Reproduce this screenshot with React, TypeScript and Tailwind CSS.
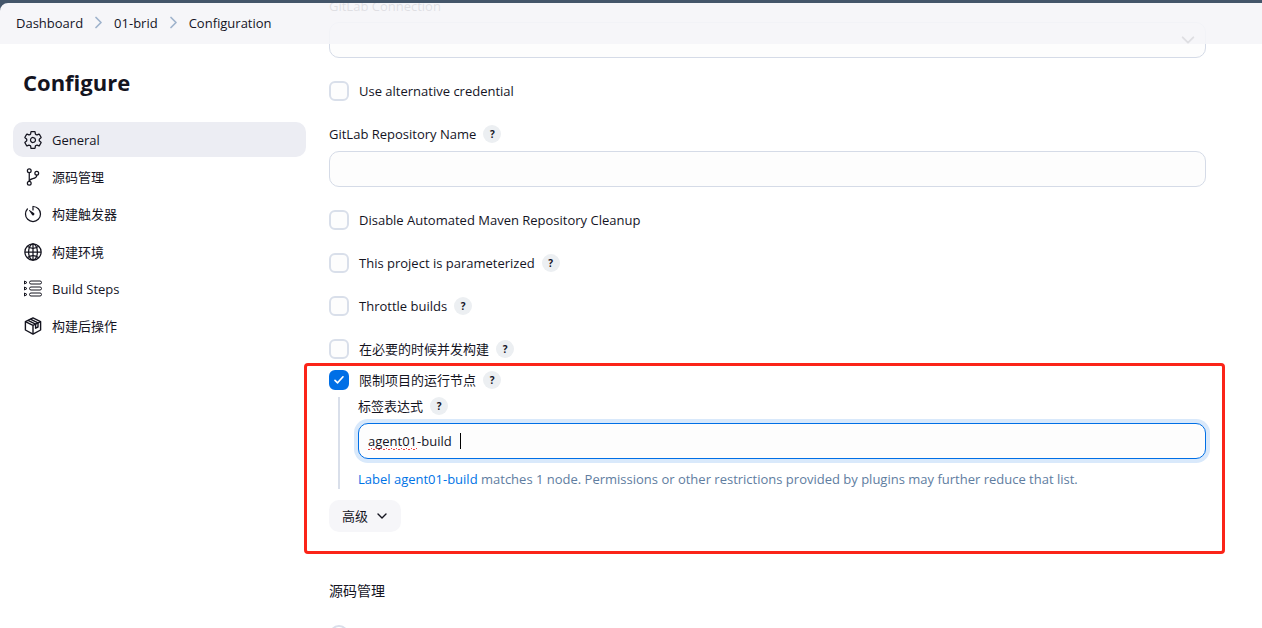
import type { ComponentType, ReactNode } from 'react';
import { IoGitBranchOutline, IoGlobeOutline, IoSettingsOutline, IoTimerOutline } from 'react-icons/io5';

type IconProps = { className?: string };

type NavItem = {
    label: string;
    icon: ComponentType<IconProps>;
    active?: boolean;
};

function StepsIcon({ className }: IconProps) {
    return (
        <svg className={className} viewBox="-1 -1 20 20" fill="none" stroke="currentColor" strokeWidth="1" strokeLinejoin="round">
            {[2.5, 8.5, 14.5].map((y) => (
                <g key={y}>
                    <path d={`M0.5 ${y - 1.5} L3 ${y} L0.5 ${y + 1.5} Z`} />
                    <rect x="5.5" y={y - 1.5} width="12" height="3" rx="1.5" />
                </g>
            ))}
        </svg>
    );
}

function PackageIcon({ className }: IconProps) {
    return (
        <svg className={className} viewBox="-1 -1 20 20" fill="none" stroke="currentColor" strokeWidth="1.4" strokeLinejoin="round">
            <path d="M9 0.9 L16.6 4.6 V13 L9 17.1 L1.4 13 V4.6 Z" />
            <path d="M1.4 4.6 L9 8.4 L16.6 4.6 M9 8.4 V17.1" />
            <path d="M4 3.4 L11.6 7.1 V11.2 L14 10 V5.9 L6.4 2.2" />
        </svg>
    );
}

function Chevron({ className }: IconProps) {
    return (
        <svg className={className} viewBox="0 0 12 12" fill="none" stroke="currentColor" strokeWidth="1.4" strokeLinecap="round" strokeLinejoin="round">
            <path d="M2 4 L6 8 L10 4" />
        </svg>
    );
}

const crumbs = ['Dashboard', '01-brid', 'Configuration'];

const navItems: NavItem[] = [
    { label: 'General', icon: IoSettingsOutline, active: true },
    { label: '源码管理', icon: IoGitBranchOutline },
    { label: '构建触发器', icon: IoTimerOutline },
    { label: '构建环境', icon: IoGlobeOutline },
    { label: 'Build Steps', icon: StepsIcon },
    { label: '构建后操作', icon: PackageIcon },
];

function Help() {
    return (
        <button
            type="button"
            aria-label="Help"
            className="flex size-[18px] shrink-0 items-center justify-center rounded-full bg-[#eceff2] text-[10px] leading-none font-bold"
        >
            ?
        </button>
    );
}

type CheckProps = { id: string; label: string; help?: boolean; checked?: boolean };

function Check({ id, label, help, checked }: CheckProps) {
    return (
        <div className="flex h-5 items-center gap-[7px]">
            <div className="flex items-center gap-[10px]">
                <span className="relative flex size-5">
                    <input
                        id={id}
                        type="checkbox"
                        defaultChecked={checked}
                        className="peer size-5 appearance-none rounded-md border-2 border-[#d9dfea] bg-[#fdfdfd] checked:border-[#006fe6] checked:bg-[#006fe6]"
                    />
                    <svg
                        className="pointer-events-none absolute inset-0 hidden size-5 peer-checked:block"
                        viewBox="0 0 20 20"
                        fill="none"
                        stroke="white"
                        strokeWidth="1.7"
                        strokeLinecap="round"
                        strokeLinejoin="round"
                    >
                        <path d="M6 10.4 L8.6 12.8 L14 6.8" />
                    </svg>
                </span>
                <label htmlFor={id}>{label}</label>
            </div>
            {help && <Help />}
        </div>
    );
}

function Field({ label, htmlFor, children }: { label: string; htmlFor: string; children: ReactNode }) {
    return (
        <div>
            <div className="mb-[6px] flex h-5 items-center gap-[7px] pb-[2px]">
                <label htmlFor={htmlFor}>{label}</label>
                <Help />
            </div>
            {children}
        </div>
    );
}

function Header() {
    return (
        <header className="relative z-10 h-11 shrink-0 border-t-[3px] border-[#44566a]">
            <nav aria-label="Breadcrumb" className="h-full bg-[#f5f5f8]/90">
                <ol className="flex h-full items-center gap-2 pb-[2px] pl-4">
                    {crumbs.map((crumb, i) => (
                        <li key={crumb} className="flex items-center gap-2">
                            {i > 0 && <Chevron className="size-[15px] -rotate-90 text-[#9fb3cc]" />}
                            <a href="#">{crumb}</a>
                        </li>
                    ))}
                </ol>
            </nav>
            {/* dark bar showing behind the rounded corner */}
            <svg className="absolute top-0 left-0 size-2" viewBox="0 0 8 8">
                <path d="M0 0 H8 A8 8 0 0 0 0 8 Z" fill="#44566a" />
            </svg>
        </header>
    );
}

function Sidebar() {
    return (
        <aside className="w-[306px] shrink-0 pt-[66px] pl-[13px]">
            <h1 className="pl-[10px] text-[22px] leading-8 font-bold">Configure</h1>
            <ul className="mt-6 flex h-[222px] flex-col justify-between">
                {navItems.map(({ label, icon: Icon, active }) => (
                    <li key={label}>
                        <a
                            href="#"
                            className={`flex h-[35px] items-center gap-[9px] rounded-[10px] pl-[10px] ${active ? 'bg-[#ecedf3]' : ''}`}
                        >
                            <Icon className="size-5" />
                            {label}
                        </a>
                    </li>
                ))}
            </ul>
        </aside>
    );
}

function App() {
    return (
        <div className="flex h-screen flex-col overflow-hidden bg-white font-['Open_Sans','Noto_Sans_CJK_SC',sans-serif] text-[13px] leading-5 text-[#14141f]">
            <Header />
            <div className="-mt-11 flex">
                <Sidebar />
                <main className="min-w-0 flex-1 pr-14 pl-[23px]">
                    <label htmlFor="connection" className="-mt-1 block">
                        GitLab Connection
                    </label>
                    <div className="relative mt-[6px]">
                        <select id="connection" className="block h-9 w-full appearance-none rounded-[10px] border border-[#d5dbe7] bg-[#fdfdfd] px-[10px]" />
                        <Chevron className="pointer-events-none absolute top-[10px] right-[10px] size-4" />
                    </div>

                    <div className="mt-[23px]">
                        <Check id="alternative" label="Use alternative credential" />
                    </div>
                    <div className="mt-6">
                        <Field label="GitLab Repository Name" htmlFor="repository">
                            <input id="repository" type="text" className="block h-9 w-full rounded-[10px] border border-[#d5dbe7] bg-[#fdfdfd] px-[10px]" />
                        </Field>
                    </div>
                    <div className="mt-[23px] flex flex-col gap-[23px]">
                        <Check id="cleanup" label="Disable Automated Maven Repository Cleanup" />
                        <Check id="parameterized" label="This project is parameterized" help />
                        <Check id="throttle" label="Throttle builds" help />
                        <Check id="concurrent" label="在必要的时候并发构建" help />
                    </div>

                    <section className="relative mt-[11px]">
                        {/* highlight frame around the node restriction */}
                        <div className="pointer-events-none absolute -top-[7px] -right-[19px] -bottom-[22px] -left-[25px] rounded-sm border-3 border-[#fb2418]" />
                        <Check id="restrict" label="限制项目的运行节点" help checked />
                        <div className="mt-[7px] ml-[9px] border-l-2 border-[#d9dfea] pl-[18px]">
                            <Field label="标签表达式" htmlFor="expression">
                                <div className="relative">
                                    <input
                                        id="expression"
                                        type="text"
                                        defaultValue="agent01-build "
                                        className="block h-9 w-full rounded-[10px] border border-[#006fe6] bg-[#fdfdfd] px-[9px] ring-4 ring-[#d9e9fb] outline-none"
                                    />
                                    <svg className="pointer-events-none absolute top-6 left-[10px] h-[3px] w-[50px]" viewBox="0 0 50 3">
                                        <path
                                            d="M0 2.5 H2 M3 1.5 H4 M5 2.5 H7 M8 1.5 H9 M10 2.5 H12 M13 1.5 H14 M15 2.5 H17 M18 1.5 H19 M20 2.5 H22 M23 1.5 H24 M25 2.5 H27 M28 1.5 H29 M30 2.5 H32 M33 1.5 H34 M35 2.5 H37 M38 1.5 H39 M40 2.5 H42 M43 1.5 H44 M45 2.5 H47 M48 1.5 H49"
                                            stroke="#f04040"
                                            strokeWidth="1"
                                        />
                                    </svg>
                                    <span className="pointer-events-none absolute top-[10px] left-[102px] h-4 w-px bg-black" />
                                </div>
                            </Field>
                            <p className="pt-[10px] text-[#607d9f]">
                                <a href="#" className="text-[#0073e6]">
                                    Label agent01-build
                                </a>{' '}
                                matches 1 node. Permissions or other restrictions provided by plugins may further reduce that list.
                            </p>
                        </div>
                        <button type="button" className="mt-[11px] flex h-8 items-center gap-2 rounded-[10px] bg-[#f6f6f9] px-[13px]">
                            高级
                            <Chevron className="size-3" />
                        </button>
                    </section>

                    <h2 className="mt-[49px] text-sm leading-5">源码管理</h2>
                    <input type="radio" aria-label="无" className="mt-6 block size-5 appearance-none rounded-full border-2 border-[#d9dfea]" />
                </main>
            </div>
        </div>
    );
}

export default App;
